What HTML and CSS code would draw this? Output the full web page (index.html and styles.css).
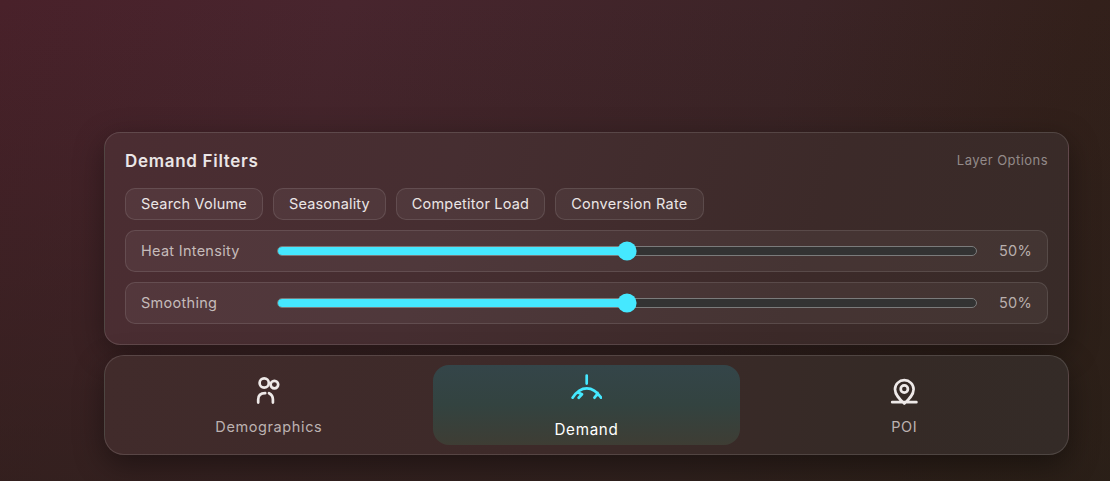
FILE: index.html
```html
<!DOCTYPE html>
<html lang="en">
<head>
<meta charset="utf-8">
<title>Demand Filters</title>
<link rel="stylesheet" href="styles.css">
</head>
<body>
<main class="stage">
  <section class="panel">
    <header class="panel-header">
      <h2 class="panel-title">Demand Filters</h2>
      <span class="panel-hint">Layer Options</span>
    </header>
    <div class="chips">
      <button class="chip">Search Volume</button>
      <button class="chip chip-snug">Seasonality</button>
      <button class="chip">Competitor Load</button>
      <button class="chip chip-wide">Conversion Rate</button>
    </div>
    <div class="row">
      <span class="row-label">Heat Intensity</span>
      <div class="track"><div class="fill" style="width:50%"></div></div>
      <span class="row-value">50%</span>
    </div>
    <div class="row">
      <span class="row-label">Smoothing</span>
      <div class="track"><div class="fill" style="width:50%"></div></div>
      <span class="row-value">50%</span>
    </div>
  </section>
  <nav class="tabs">
    <button class="tab">
      <svg class="icon" viewBox="253 375 32 32">
        <circle cx="264.2" cy="383" r="4.6"/>
        <circle cx="274.4" cy="384.6" r="3.8"/>
        <path d="M258.2 402.6V399.5C258.2 395.6 261 393.3 265.2 393.2M269 393.2C271.4 394.4 272.9 396.6 272.9 399.5V402.6"/>
      </svg>
      <span class="tab-label">Demographics</span>
    </button>
    <button class="tab tab-active">
      <svg class="icon" viewBox="570 372 32 32">
        <path d="M586.7 375.5V383.6M572.6 397.7C580.8 385.2 592.8 385.2 601.1 397.7M578 392.6L582 394.2L578.7 397.7M597.5 392.8L596.9 394.6L594.5 397.7M596.9 394.6L598.8 395.2"/>
      </svg>
      <span class="tab-label">Demand</span>
    </button>
    <button class="tab">
      <svg class="icon" viewBox="888.3 375 32 32">
        <path d="M904.6 403.6C900 399.4 895.3 395 895.3 389.3A9.3 9.1 0 0 1 913.9 389.3C913.9 395 909.2 399.4 904.6 403.6ZM892.5 402.2H916.7"/>
        <circle cx="904.6" cy="389" r="3.6"/>
      </svg>
      <span class="tab-label">POI</span>
    </button>
  </nav>
</main>
</body>
</html>
```
FILE: styles.css
```css
* { box-sizing: border-box; }
body {
  margin: 0;
  font-family: Inter, "Liberation Sans", sans-serif;
  color: #ebe6e6;
  background:
    linear-gradient(180deg, rgba(38, 30, 22, 0) 0%, rgba(38, 30, 22, .6) 100%),
    linear-gradient(105deg, #49212a 0%, #48252e 28%, #3c2427 65%, #33201b 88%, #31211a 100%);
}
button { font: inherit; color: inherit; border: 0; background: none; padding: 0; }
.stage {
  height: 481px;
  padding: 132px 41px 26px 104px;
  display: flex;
  flex-direction: column;
  gap: 10px;
  overflow: hidden;
}
.panel {
  height: 213px;
  padding: 16px 20px 20px;
  display: flex;
  flex-direction: column;
  gap: 10px;
  border: 1px solid rgba(255, 255, 255, .13);
  border-radius: 16px;
  background: linear-gradient(108deg, #4b2d32 0%, #462e31 35%, #3c2a29 72%, #382b28 100%);
  box-shadow: 0 8px 30px rgba(0, 0, 0, .35);
}
.panel-header {
  height: 29px;
  padding-bottom: 6px;
  display: flex;
  align-items: center;
  justify-content: space-between;
}
.panel-title { margin: 0; font-size: 17px; font-weight: 600; letter-spacing: .7px; }
.panel-hint { padding-bottom: 1px; font-size: 13px; letter-spacing: .45px; color: #938a89; }
.chips { display: flex; gap: 10px; }
.chip {
  height: 32px;
  padding: 0 15px 2px;
  border: 1px solid rgba(255, 255, 255, .11);
  border-radius: 10px;
  background: rgba(255, 255, 255, .05);
  font-size: 14.5px;
  letter-spacing: .2px;
  white-space: nowrap;
}
.chip-snug { letter-spacing: .13px; }
.chip-wide { letter-spacing: .26px; }
.row {
  height: 42px;
  padding: 0 15px;
  display: flex;
  align-items: center;
  border: 1px solid rgba(255, 255, 255, .11);
  border-radius: 10px;
  background: rgba(255, 255, 255, .05);
  font-size: 14.5px;
  letter-spacing: .28px;
  color: #c5bbba;
}
.row-label { width: 136px; padding-bottom: 2px; }
.row-value { flex: 1; padding-bottom: 2px; text-align: right; color: #b9afad; }
.track {
  width: 700px;
  height: 10px;
  border: 1px solid #7b7b7b;
  border-radius: 5px;
  background: #333;
}
.fill {
  height: 8px;
  display: flex;
  align-items: center;
  justify-content: flex-end;
  border-radius: 4px 0 0 4px;
  background: #45e8ff;
}
.fill::after {
  content: "";
  width: 20px;
  height: 20px;
  flex: none;
  margin-right: -10px;
  clip-path: circle(9.6px);
  background: #45e8ff;
}
.tabs {
  height: 100px;
  padding: 9px 10px;
  display: grid;
  grid-template-columns: repeat(3, 1fr);
  gap: 10px;
  border: 1px solid rgba(255, 255, 255, .13);
  border-radius: 20px;
  background: linear-gradient(95deg, #412b2b 0%, #3d2a29 45%, #352a26 80%, #342b27 100%);
  box-shadow: 0 10px 30px rgba(0, 0, 0, .4);
}
.tab {
  padding-top: 10px;
  display: flex;
  flex-direction: column;
  align-items: center;
  gap: 10px;
  border-radius: 16px;
  font-size: 14.5px;
  line-height: 20px;
  letter-spacing: .6px;
  color: #bcb2b1;
}
.tab-active {
  padding-top: 7px;
  gap: 16px;
  font-size: 15.2px;
  letter-spacing: .7px;
  color: #fff;
  background: linear-gradient(180deg, #344549 0%, #334340 50%, #3e3d34 100%);
}
.icon {
  width: 32px;
  height: 32px;
  flex: none;
  fill: none;
  stroke: #eee9e8;
  stroke-width: 2.7;
  stroke-linecap: round;
  stroke-linejoin: round;
}
.tab-active .icon { stroke: #45e8ff; }
```
